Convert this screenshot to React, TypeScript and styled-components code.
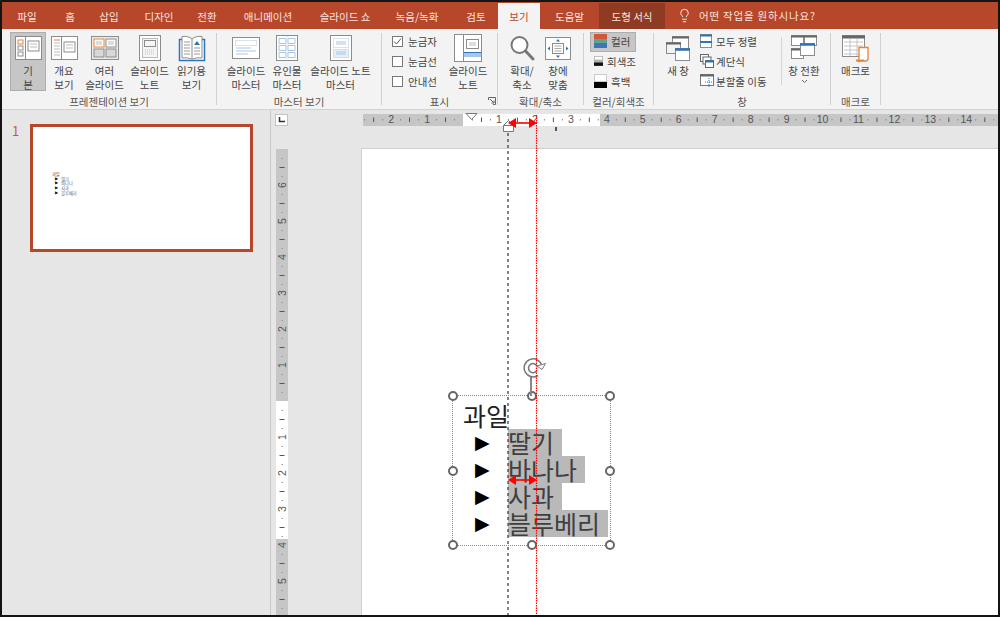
import React, { FC, ReactNode } from "react";
import styled, { createGlobalStyle } from "styled-components";
import { Lightbulb } from "lucide-react";

const GlobalStyle = createGlobalStyle`
  html, body {
    margin: 0;
    padding: 0;
    overflow: hidden;
    background: #fff;
  }
`;

const Frame = styled.div`
  width: 1000px;
  height: 617px;
  box-sizing: border-box;
  border: 2px solid #141414;
  display: flex;
  flex-direction: column;
  overflow: hidden;
  font-family: "Noto Sans CJK KR", "Noto Sans", sans-serif;
  color: #444;
`;

const TabBar = styled.div`
  height: 27px;
  flex: none;
  background: #b7472a;
  display: flex;
  align-items: stretch;
`;

const Tab = styled.div<{ $w: number; $active?: boolean; $context?: boolean }>`
  width: ${(p) => p.$w}px;
  flex: none;
  display: flex;
  align-items: center;
  justify-content: center;
  font-size: 10.5px;
  margin-top: 1px;
  color: ${(p) => (p.$active ? "#b7472a" : "#f8e6e0")};
  background: ${(p) => (p.$active ? "#f3f3f3" : p.$context ? "#8f3a22" : "transparent")};
`;

const Search = styled.div`
  margin-left: 12px;
  display: flex;
  align-items: center;
  gap: 7px;
  font-size: 10.5px;
  letter-spacing: 0.8px;
  color: #f8e6e0;
`;

const Ribbon = styled.div`
  height: 80px;
  flex: none;
  background: #f3f3f3;
  border-bottom: 1px solid #d2d2d2;
  display: flex;
  align-items: center;
`;

const Group = styled.div<{ $w: number }>`
  width: ${(p) => p.$w}px;
  flex: none;
  height: 80px;
  display: flex;
  flex-direction: column;
`;

const GroupBody = styled.div<{ $pad?: number }>`
  height: 66px;
  padding: 3px 0 0 ${(p) => p.$pad ?? 0}px;
  box-sizing: border-box;
  display: flex;
  align-items: flex-start;
`;

const GroupLabel = styled.div`
  height: 14px;
  position: relative;
  font-size: 10.5px;
  line-height: 14px;
  text-align: center;
  color: #555;
`;

const Launcher = styled.svg`
  position: absolute;
  right: 1px;
  top: 2px;
`;

const Sep = styled.div`
  width: 1px;
  height: 72px;
  flex: none;
  background: #cfcfcf;
`;

const InnerSep = styled.div`
  width: 1px;
  height: 48px;
  margin-top: 5px;
  flex: none;
  background: #d6d6d6;
`;

const BigButton = styled.div<{ $w: number; $selected?: boolean }>`
  width: ${(p) => p.$w}px;
  height: 59px;
  flex: none;
  box-sizing: border-box;
  padding-top: 2px;
  display: flex;
  flex-direction: column;
  align-items: center;
  background: ${(p) => (p.$selected ? "#c6c6c6" : "transparent")};
  outline: ${(p) => (p.$selected ? "1px solid #aeaeae" : "none")};
  outline-offset: -1px;
`;

const IconSlot = styled.div`
  height: 28px;
  flex: none;
  display: flex;
  align-items: center;
  justify-content: center;
`;

const BigLabel = styled.div`
  margin-top: 2px;
  font-size: 10.5px;
  line-height: 14px;
  text-align: center;
  white-space: pre;
  color: #444;
`;

const Rows = styled.div<{ $w?: number; $pad?: number }>`
  width: ${(p) => (p.$w ? `${p.$w}px` : "auto")};
  padding-left: ${(p) => p.$pad ?? 0}px;
  flex: none;
  display: flex;
  flex-direction: column;
`;

const SmallRow = styled.div<{ $selected?: boolean; $gap?: number; $inset?: number }>`
  height: 20px;
  box-sizing: border-box;
  padding: 0 0 2px ${(p) => p.$inset ?? 0}px;
  display: flex;
  align-items: center;
  gap: ${(p) => p.$gap ?? 5}px;
  font-size: 10.5px;
  white-space: nowrap;
  color: #444;
  background: ${(p) => (p.$selected ? "#c6c6c6" : "transparent")};
  outline: ${(p) => (p.$selected ? "1px solid #aeaeae" : "none")};
  outline-offset: -1px;
`;

const Check = styled.div<{ $on?: boolean }>`
  width: 11px;
  height: 11px;
  box-sizing: border-box;
  border: 1px solid #777;
  background: #fff;
  display: flex;
  align-items: center;
  justify-content: center;
`;

const Chevron = styled.svg`
  margin-top: 1px;
`;

const Workspace = styled.div`
  flex: 1;
  min-height: 0;
  display: flex;
  background: #e6e6e6;
`;

const ThumbPanel = styled.div`
  width: 269px;
  flex: none;
  box-sizing: border-box;
  padding: 14px 0 0 10px;
  border-right: 1px solid #cacaca;
  display: flex;
  align-items: flex-start;
`;

const ThumbNumber = styled.div`
  width: 18px;
  font-size: 13px;
  line-height: 13px;
  color: #c9593c;
`;

const Thumb = styled.div`
  width: 223px;
  height: 128px;
  box-sizing: border-box;
  border: 3px solid #b7472a;
  background: #fff;
  position: relative;
`;

const MiniText = styled.div`
  position: absolute;
  left: 19px;
  top: 45px;
  font-size: 4.2px;
  line-height: 4.7px;
  color: #444;
`;

const MiniRow = styled.div`
  display: flex;
  padding-left: 3px;
  gap: 3px;
  color: #666;
  span:first-child {
    color: #111;
    font-family: "DejaVu Sans", sans-serif;
  }
`;

const Editor = styled.div`
  flex: 1;
  min-width: 0;
  position: relative;
  display: grid;
  grid-template-columns: 90px 1fr;
  grid-template-rows: 38px 1fr;
`;

const CornerCell = styled.div`
  padding: 4px 0 0 4px;
`;

const CornerButton = styled.div`
  width: 13px;
  height: 12px;
  box-sizing: border-box;
  background: #fff;
  border: 1px solid #c4c4c4;
  display: flex;
  align-items: center;
  justify-content: center;
`;

const RulerSvg = styled.svg`
  display: block;
  font-family: "Liberation Sans", sans-serif;
`;

const Slide = styled.div`
  background: #fff;
  border-left: 1px solid #d0d0d0;
  border-top: 1px solid #d0d0d0;
  position: relative;
  overflow: hidden;
`;

const Shape = styled.div`
  position: absolute;
  left: 90px;
  top: 246px;
  width: 159px;
  height: 151px;
  box-sizing: border-box;
  border: 1.5px dotted #888;
  padding: 6px 0 0 10px;
`;

const Handle = styled.div<{ $col: number; $row: number }>`
  position: absolute;
  left: ${(p) => p.$col * 50}%;
  top: ${(p) => p.$row * 50}%;
  width: 10px;
  height: 10px;
  box-sizing: border-box;
  border: 2px solid #666;
  border-radius: 50%;
  background: #fff;
  transform: translate(-50%, -50%);
`;

const RotateStem = styled.div`
  position: absolute;
  left: 77px;
  top: -20px;
  width: 1.5px;
  height: 20px;
  background: #888;
`;

const RotateIcon = styled.svg`
  position: absolute;
  left: 70px;
  top: -39px;
`;

const TitleLine = styled.div`
  font-size: 25px;
  line-height: 27px;
  color: #222;
`;

const BulletRow = styled.div`
  height: 27px;
  margin-left: 12px;
  display: flex;
  align-items: center;
`;

const Bullet = styled.div`
  width: 33px;
  flex: none;
  font-family: "DejaVu Sans", sans-serif;
  font-size: 19px;
  line-height: 27px;
  color: #000;
`;

const Selected = styled.div`
  height: 27px;
  padding-right: 8px;
  background: #b9b9b9;
  font-size: 25px;
  line-height: 27px;
  color: #404040;
`;

const Overlay = styled.svg`
  position: absolute;
  left: 0;
  top: 0;
  pointer-events: none;
`;

const G = "#8c8c8c";
const B = "#2e75b6";
const O = "#e8833a";
const LB = "#a9c6e6";

const Ico: FC<{ w?: number; h?: number; children: ReactNode }> = ({ w = 28, h = 28, children }) => (
  <svg width={w} height={h} viewBox={`0 0 ${w} ${h}`} fill="none">
    {children}
  </svg>
);

const IconNormal = () => (
  <Ico>
    <rect x="1.5" y="2.5" width="26" height="23" fill="#fff" stroke={G} />
    <rect x="4" y="6" width="5" height="4" stroke={O} />
    <rect x="4" y="12" width="5" height="4" stroke={G} />
    <rect x="4" y="18" width="5" height="4" stroke={G} />
    <path d="M11.5 2.5v23" stroke={G} />
    <rect x="14" y="7" width="11" height="10" stroke={G} />
    <path d="M16 10h7M16 13h7" stroke="#bbb" />
  </Ico>
);

const IconOutline = () => (
  <Ico>
    <rect x="1.5" y="2.5" width="26" height="23" fill="#fff" stroke={G} />
    <path d="M4 6h6" stroke={O} />
    <path d="M4 9h6M4 12h6M4 15h6M4 18h6M4 21h6" stroke="#bbb" />
    <path d="M11.5 2.5v23" stroke={G} />
    <rect x="14" y="8" width="11" height="10" stroke={G} />
    <path d="M16 11h7M16 14h7" stroke="#bbb" />
  </Ico>
);

const IconSorter = () => (
  <Ico w={30}>
    <rect x="1.5" y="2.5" width="27" height="23" fill="#ececec" stroke={G} />
    <rect x="4" y="5" width="10" height="8" fill="#fff" stroke={O} />
    <path d="M6 8h6M6 10h6" stroke="#bbb" />
    <rect x="16" y="5" width="10" height="8" fill="#fff" stroke={G} />
    <path d="M18 8h6M18 10h6" stroke="#bbb" />
    <rect x="4" y="15" width="10" height="8" fill="#d8d8d8" stroke={G} />
    <rect x="16" y="15" width="10" height="8" fill="#d8d8d8" stroke={G} />
  </Ico>
);

const IconNotes = () => (
  <Ico>
    <rect x="3.5" y="1.5" width="21" height="25" fill="#fff" stroke={G} />
    <rect x="6.5" y="4.5" width="15" height="19" fill="#f5f5f5" stroke="#bbb" />
    <rect x="8.5" y="6.5" width="11" height="6" stroke={G} />
    <path d="M9 16h10M9 18h10M9 20h10" stroke={LB} strokeDasharray="1 1" />
  </Ico>
);

const IconReading = () => (
  <Ico>
    <path d="M1.5 5.5h25v21h-25z" fill="#fff" stroke={B} strokeWidth="1.5" />
    <path d="M14 5c-2-2-6-3-10-2.5V24c4-.5 8 0 10 1.5 2-1.5 6-2 10-1.5V2.5C20 2 16 3 14 5z" fill="#fff" stroke={G} />
    <path d="M14 5v20" stroke={G} />
    <path d="M6 8h6M6 11h6M6 14h6M6 17h6M6 20h6" stroke="#999" />
    <path d="M16 14h6M16 17h6M16 20h6" stroke="#999" />
    <path d="M16 11l3-4 3 4z" fill={B} />
  </Ico>
);

const IconSlideMaster = () => (
  <Ico w={30}>
    <rect x="1.5" y="3.5" width="27" height="21" fill="#fff" stroke={G} />
    <rect x="4.5" y="6.5" width="21" height="5" stroke={LB} strokeDasharray="1 1" />
    <path d="M5 14h15M5 17h20M5 20h12" stroke={LB} />
  </Ico>
);

const IconHandout = () => (
  <Ico>
    <rect x="3.5" y="1.5" width="21" height="25" fill="#fff" stroke={G} />
    <path d="M6 4.5h7v5H6zM15 4.5h7v5h-7zM6 11.5h7v5H6zM15 11.5h7v5h-7zM6 18.5h7v5H6zM15 18.5h7v5h-7z" stroke={LB} />
    <path d="M14 2v24" stroke="#c7d8ec" strokeDasharray="1 1" />
  </Ico>
);

const IconNotesMaster = () => (
  <Ico>
    <rect x="3.5" y="1.5" width="21" height="25" fill="#fff" stroke={G} />
    <rect x="6.5" y="4.5" width="15" height="9" stroke={LB} strokeDasharray="1 1" />
    <rect x="6.5" y="15.5" width="15" height="8" fill="#e6eef8" stroke={LB} strokeDasharray="1 1" />
    <path d="M9 8h10M9 10h10M9 18h10M9 20h10" stroke={LB} />
  </Ico>
);

const IconNotePage = () => (
  <Ico w={30} h={30}>
    <rect x="1.5" y="1.5" width="27" height="27" fill="#fff" stroke={G} />
    <path d="M10.5 1.5v27" stroke={G} />
    <rect x="13.5" y="6.5" width="12" height="9" stroke={G} />
    <path d="M16 10h7M16 12h7" stroke="#bbb" />
    <path d="M11 19.5h17" stroke={B} />
    <rect x="11" y="20" width="17" height="4" fill={LB} />
  </Ico>
);

const IconZoom = () => (
  <Ico w={26} h={28}>
    <circle cx="10.5" cy="11" r="8" fill="#fff" stroke="#777" strokeWidth="2" />
    <path d="M16.5 17l7.5 8" stroke="#777" strokeWidth="3" strokeLinecap="round" />
  </Ico>
);

const IconFit = () => (
  <Ico>
    <rect x="1.5" y="3.5" width="25" height="22" fill="#fff" stroke={G} />
    <rect x="8.5" y="9.5" width="11" height="10" stroke={G} />
    <path d="M10.5 12h7M10.5 14.5h7M10.5 17h7" stroke="#aaa" />
    <path d="M14 5l2 2.5h-4zM14 24l2-2.5h-4zM3.5 14.5l2.5-2v4zM24.5 14.5l-2.5-2v4z" fill={B} />
  </Ico>
);

const IconColor = () => (
  <Ico w={13} h={14}>
    <rect width="13" height="5" fill="#d0573a" />
    <rect y="5" width="13" height="4" fill="#5da58a" />
    <rect y="9" width="13" height="5" fill="#3f74b8" />
  </Ico>
);

const IconGray = () => (
  <Ico w={13} h={14}>
    <rect x=".5" y=".5" width="12" height="13" fill="#fff" stroke="#aaa" />
    <rect y="5" width="13" height="4" fill="#b0b0b0" />
    <rect y="9" width="13" height="5" fill="#111" />
  </Ico>
);

const IconBw = () => (
  <Ico w={13} h={14}>
    <rect x=".5" y=".5" width="12" height="7" fill="#fff" stroke="#ccc" />
    <rect y="8" width="13" height="6" fill="#000" />
  </Ico>
);

const IconNewWindow = () => (
  <Ico w={24} h={28}>
    <rect x="6.5" y="2.5" width="16" height="13" fill="#fff" stroke={G} />
    <path d="M6 3.5h17" stroke="#666" strokeWidth="2" />
    <rect x=".5" y="8.5" width="14" height="11" fill="#f3f3f3" stroke={G} />
    <path d="M0 9.5h15" stroke="#666" strokeWidth="2" />
    <rect x="9.5" y="14.5" width="14" height="12" fill="#fff" stroke={G} />
    <path d="M9 15.5h15" stroke={B} strokeWidth="2.5" />
  </Ico>
);

const IconArrange = () => (
  <Ico w={12} h={14}>
    <rect x=".5" y=".5" width="11" height="13" fill="#fff" stroke={G} />
    <path d="M0 1.5h12M0 8h12" stroke={B} strokeWidth="2" />
  </Ico>
);

const IconCascade = () => (
  <Ico w={14} h={14}>
    <rect x=".5" y=".5" width="8" height="7" fill="#fff" stroke="#666" />
    <rect x="3" y="3" width="8" height="7" fill="#fff" stroke="#666" />
    <rect x="5.5" y="6.5" width="8" height="7" fill="#fff" stroke="#666" />
    <path d="M5 7.5h9" stroke={B} strokeWidth="2" />
  </Ico>
);

const IconSplit = () => (
  <Ico w={14} h={14}>
    <rect x=".5" y=".5" width="13" height="11" fill="#fff" stroke="#777" />
    <path d="M0 1.5h14" stroke="#666" strokeWidth="2" />
    <path d="M9 4v9M5 8h8" stroke={B} strokeDasharray="1 1" />
  </Ico>
);

const IconSwitch = () => (
  <Ico w={26} h={28}>
    <rect x=".5" y="1.5" width="12" height="10" fill="#fff" stroke={G} />
    <path d="M0 2.5h13" stroke="#666" strokeWidth="2" />
    <rect x="13.5" y="1.5" width="12" height="10" fill="#fff" stroke={G} />
    <path d="M13 2.5h13" stroke="#666" strokeWidth="2" />
    <rect x=".5" y="14.5" width="12" height="10" fill="#fff" stroke={G} />
    <path d="M0 15.5h13" stroke="#666" strokeWidth="2" />
    <rect x="9.5" y="9.5" width="14" height="12" fill="#fff" stroke={G} />
    <path d="M9 10.5h15" stroke={B} strokeWidth="2.5" />
  </Ico>
);

const IconMacro = () => (
  <Ico w={28} h={30}>
    <rect x=".5" y="2.5" width="22" height="21" fill="#fff" stroke={G} />
    <path d="M0 4h23" stroke="#666" strokeWidth="3" />
    <path d="M2 9h19M2 13h19M2 17h19M2 21h19M8 6v17M15 6v17" stroke="#c4c4c4" />
    <path d="M17 14.5h9v11c0 1.5-1 2.5-2.5 2.5H15c1.5 0 2-1 2-2.5z" fill="#fff" stroke={O} strokeWidth="1.3" />
    <path d="M14 26.5h8c0 1-.5 2-2 2h-6z" fill={O} />
  </Ico>
);

const SmallCheckMark = () => (
  <svg width="9" height="9" viewBox="0 0 9 9" fill="none">
    <path d="M1 4.5l2.5 2.5L8 1.5" stroke="#555" strokeWidth="1" />
  </svg>
);

const HRULER_START = 361;
const HRULER_END = 998;
const INCH = 35.95;
const H_ZERO = 463;
const V_ZERO = 401;

const HRuler = () => {
  const marks: ReactNode[] = [];
  for (let i = -3; i < 16; i++) {
    const x = H_ZERO + i * INCH;
    const n = Math.abs(i);
    if (i !== 0 && x > HRULER_START && x < 990) {
      marks.push(
        <text key={`n${i}`} x={x} y={122.5} fontSize="10.5" textAnchor="middle" fill="#555">
          {n}
        </text>
      );
    }
    [0.25, 0.75].forEach((f) =>
      marks.push(<rect key={`d${i}${f}`} x={x + f * INCH} y={119} width="1" height="1.5" fill="#888" />)
    );
    marks.push(<rect key={`t${i}`} x={x + 0.5 * INCH} y={117.5} width="1" height="4.5" fill="#555" />);
  }
  return (
    <RulerSvg width={HRULER_END - HRULER_START} height={38} viewBox={`${HRULER_START} 110 ${HRULER_END - HRULER_START} 38`}>
      <rect x="363" y="114" width="100" height="12" fill="#c6c6c6" />
      <rect x="463" y="114" width="137" height="12" fill="#fff" />
      <rect x="600" y="114" width="398" height="12" fill="#c6c6c6" />
      {marks}
      <rect x="555" y="127" width="2" height="4" fill="#555" />
    </RulerSvg>
  );
};

const VRuler = () => {
  const marks: ReactNode[] = [];
  for (let i = -7; i < 7; i++) {
    const y = V_ZERO + i * 36;
    const n = Math.abs(i);
    if (i !== 0 && y > 160 && y < 605) {
      marks.push(
        <text
          key={`n${i}`}
          x={282}
          y={y}
          fontSize="10.5"
          textAnchor="middle"
          dominantBaseline="central"
          fill="#555"
          transform={`rotate(-90 282 ${y})`}
        >
          {n}
        </text>
      );
    }
    [0.25, 0.75].forEach((f) =>
      marks.push(<rect key={`d${i}${f}`} x={281.5} y={y + f * 36} width="1.5" height="1" fill="#999" />)
    );
    marks.push(<rect key={`t${i}`} x={279.5} y={y + 18} width="5" height="1" fill="#555" />);
  }
  return (
    <RulerSvg width={90} height={467} viewBox="271 148 90 467">
      <rect x="276" y="149" width="12" height="252" fill="#c6c6c6" />
      <rect x="276" y="401" width="12" height="138" fill="#fff" />
      <rect x="276" y="539" width="12" height="76" fill="#c6c6c6" />
      {marks}
    </RulerSvg>
  );
};

const RedArrow: FC<{ x1: number; x2: number; y: number }> = ({ x1, x2, y }) => (
  <g fill="#f00">
    <rect x={x1 + 6} y={y - 0.8} width={x2 - x1 - 12} height="1.6" />
    <path d={`M${x1} ${y}l8-5v10z`} />
    <path d={`M${x2} ${y}l-8-5v10z`} />
  </g>
);

const Annotations = () => (
  <Overlay width={727} height={505} viewBox="271 110 727 505">
    <path d="M466 113.5h11l-5.5 6z" fill="#fff" stroke="#777" />
    <path d="M503.5 131.5v-6l5-5 5 5v6z" fill="#fff" stroke="#777" />
    <path d="M503.5 125.5h10" stroke="#777" />
    <path d="M508 133V615" stroke="#333" strokeWidth="1.2" strokeDasharray="3 3" />
    <path d="M536.5 115V615" stroke="#f00" strokeWidth="1.2" strokeDasharray="1.5 1" />
    <RedArrow x1={508} x2={537} y={123} />
    <RedArrow x1={508} x2={537} y={480} />
  </Overlay>
);

const bullets = ["딸기", "바나나", "사과", "블루베리"];
const handles = [
  [0, 0],
  [1, 0],
  [2, 0],
  [0, 1],
  [2, 1],
  [0, 2],
  [1, 2],
  [2, 2],
];

const tabs: { label: string; w: number; active?: boolean; context?: boolean }[] = [
  { label: "파일", w: 50 },
  { label: "홈", w: 36 },
  { label: "삽입", w: 42 },
  { label: "디자인", w: 58 },
  { label: "전환", w: 38 },
  { label: "애니메이션", w: 84 },
  { label: "슬라이드 쇼", w: 70 },
  { label: "녹음/녹화", w: 74 },
  { label: "검토", w: 44 },
  { label: "보기", w: 42, active: true },
  { label: "도움말", w: 59 },
  { label: "도형 서식", w: 66, context: true },
];

export default function App() {
  return (
    <>
      <GlobalStyle />
      <Frame>
        <TabBar>
          {tabs.map((t) => (
            <Tab key={t.label} $w={t.w} $active={t.active} $context={t.context}>
              {t.label}
            </Tab>
          ))}
          <Search>
            <Lightbulb size={15} strokeWidth={1.4} color="#fff" />
            어떤 작업을 원하시나요?
          </Search>
        </TabBar>

        <Ribbon>
          <Group $w={214}>
            <GroupBody $pad={8}>
              <BigButton $w={36} $selected>
                <IconSlot><IconNormal /></IconSlot>
                <BigLabel>{"기\n본"}</BigLabel>
              </BigButton>
              <BigButton $w={36}>
                <IconSlot><IconOutline /></IconSlot>
                <BigLabel>{"개요\n보기"}</BigLabel>
              </BigButton>
              <BigButton $w={45}>
                <IconSlot><IconSorter /></IconSlot>
                <BigLabel>{"여러\n슬라이드"}</BigLabel>
              </BigButton>
              <BigButton $w={45}>
                <IconSlot><IconNotes /></IconSlot>
                <BigLabel>{"슬라이드\n노트"}</BigLabel>
              </BigButton>
              <BigButton $w={39}>
                <IconSlot><IconReading /></IconSlot>
                <BigLabel>{"읽기용\n보기"}</BigLabel>
              </BigButton>
            </GroupBody>
            <GroupLabel>프레젠테이션 보기</GroupLabel>
          </Group>
          <Sep />
          <Group $w={164}>
            <GroupBody $pad={8}>
              <BigButton $w={42}>
                <IconSlot><IconSlideMaster /></IconSlot>
                <BigLabel>{"슬라이드\n마스터"}</BigLabel>
              </BigButton>
              <BigButton $w={40}>
                <IconSlot><IconHandout /></IconSlot>
                <BigLabel>{"유인물\n마스터"}</BigLabel>
              </BigButton>
              <BigButton $w={67}>
                <IconSlot><IconNotesMaster /></IconSlot>
                <BigLabel>{"슬라이드 노트\n마스터"}</BigLabel>
              </BigButton>
            </GroupBody>
            <GroupLabel>마스터 보기</GroupLabel>
          </Group>
          <Sep />
          <Group $w={115}>
            <GroupBody $pad={10}>
              <Rows $w={53}>
                <SmallRow>
                  <Check $on><SmallCheckMark /></Check>
                  눈금자
                </SmallRow>
                <SmallRow>
                  <Check />
                  눈금선
                </SmallRow>
                <SmallRow>
                  <Check />
                  안내선
                </SmallRow>
              </Rows>
              <BigButton $w={46}>
                <IconSlot><IconNotePage /></IconSlot>
                <BigLabel>{"슬라이드\n노트"}</BigLabel>
              </BigButton>
            </GroupBody>
            <GroupLabel>
              표시
              <Launcher width="8" height="8" viewBox="0 0 8 8" fill="none">
                <path d="M.5 3V.5H7.5V7.5H5M2 2l4 4M6 3.5V6H3.5" stroke="#666" />
              </Launcher>
            </GroupLabel>
          </Group>
          <Sep />
          <Group $w={85}>
            <GroupBody $pad={6}>
              <BigButton $w={36}>
                <IconSlot><IconZoom /></IconSlot>
                <BigLabel>{"확대/\n축소"}</BigLabel>
              </BigButton>
              <BigButton $w={36}>
                <IconSlot><IconFit /></IconSlot>
                <BigLabel>{"창에\n맞춤"}</BigLabel>
              </BigButton>
            </GroupBody>
            <GroupLabel>확대/축소</GroupLabel>
          </Group>
          <Sep />
          <Group $w={69}>
            <GroupBody $pad={6}>
              <Rows $w={46}>
                <SmallRow $selected $gap={4} $inset={4}>
                  <IconColor />
                  컬러
                </SmallRow>
                <SmallRow $gap={4} $inset={4}>
                  <IconGray />
                  회색조
                </SmallRow>
                <SmallRow $gap={4} $inset={4}>
                  <IconBw />
                  흑백
                </SmallRow>
              </Rows>
            </GroupBody>
            <GroupLabel>컬러/회색조</GroupLabel>
          </Group>
          <Sep />
          <Group $w={176}>
            <GroupBody $pad={8}>
              <BigButton $w={32}>
                <IconSlot><IconNewWindow /></IconSlot>
                <BigLabel>새 창</BigLabel>
              </BigButton>
              <Rows $w={81} $pad={6}>
                <SmallRow $gap={4}>
                  <IconArrange />
                  모두 정렬
                </SmallRow>
                <SmallRow $gap={2}>
                  <IconCascade />
                  계단식
                </SmallRow>
                <SmallRow $gap={2}>
                  <IconSplit />
                  분할줄 이동
                </SmallRow>
              </Rows>
              <InnerSep />
              <BigButton $w={44}>
                <IconSlot><IconSwitch /></IconSlot>
                <BigLabel>창 전환</BigLabel>
                <Chevron width="7" height="5" viewBox="0 0 7 5" fill="none">
                  <path d="M1 1l2.5 2.5L6 1" stroke="#666" />
                </Chevron>
              </BigButton>
            </GroupBody>
            <GroupLabel>창</GroupLabel>
          </Group>
          <Sep />
          <Group $w={49}>
            <GroupBody>
              <BigButton $w={49}>
                <IconSlot><IconMacro /></IconSlot>
                <BigLabel>매크로</BigLabel>
              </BigButton>
            </GroupBody>
            <GroupLabel>매크로</GroupLabel>
          </Group>
          <Sep />
        </Ribbon>

        <Workspace>
          <ThumbPanel>
            <ThumbNumber>1</ThumbNumber>
            <Thumb>
              <MiniText>
                과일
                {bullets.map((b) => (
                  <MiniRow key={b}>
                    <span>▶</span>
                    <span>{b}</span>
                  </MiniRow>
                ))}
              </MiniText>
            </Thumb>
          </ThumbPanel>
          <Editor>
            <CornerCell>
              <CornerButton>
                <svg width="7" height="6" viewBox="0 0 7 6" fill="none">
                  <path d="M1.5 0v4.5H7" stroke="#333" strokeWidth="1.5" />
                </svg>
              </CornerButton>
            </CornerCell>
            <HRuler />
            <VRuler />
            <Slide>
              <Shape>
                <TitleLine>과일</TitleLine>
                {bullets.map((b) => (
                  <BulletRow key={b}>
                    <Bullet>▶</Bullet>
                    <Selected>{b}</Selected>
                  </BulletRow>
                ))}
                {handles.map(([c, r]) => (
                  <Handle key={`${c}-${r}`} $col={c} $row={r} />
                ))}
                <RotateStem />
                <RotateIcon width="24" height="22" viewBox="0 0 24 22" fill="none">
                  <path d="M19 9A9 9 0 1 0 15 18.5" stroke="#777" strokeWidth="1.5" />
                  <path d="M14 9a4.5 4.5 0 1 0-.5 5" stroke="#777" strokeWidth="1.5" />
                  <path d="M14 9l5 3.5 3.5-6z" fill="#fff" stroke="#777" />
                </RotateIcon>
              </Shape>
            </Slide>
            <Annotations />
          </Editor>
        </Workspace>
      </Frame>
    </>
  );
}
